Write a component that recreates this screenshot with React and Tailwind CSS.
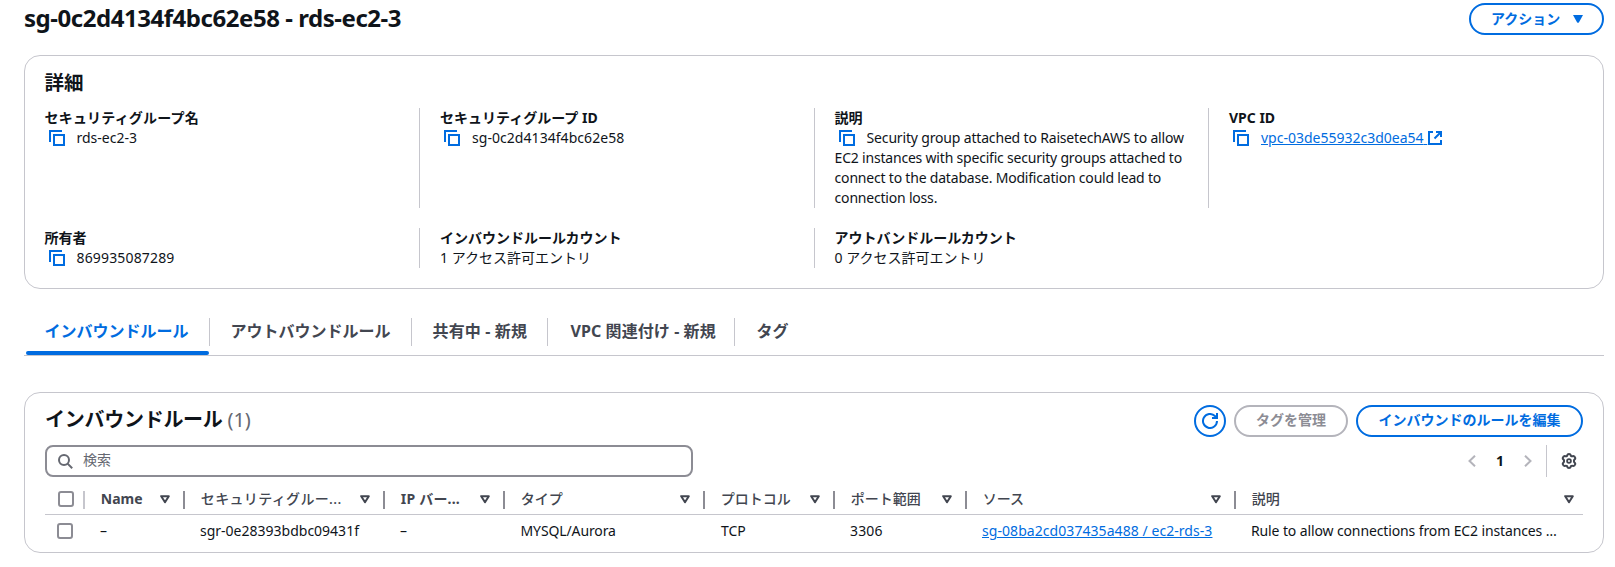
const LATIN = "font-['Noto_Sans','Noto_Sans_CJK_JP',sans-serif]";

function CopyIcon() {
  return (
    <svg className="ml-1 mr-3 mt-0.5 inline-block h-4 w-4 align-top" viewBox="0 0 16 16" fill="none" stroke="#006ce0" strokeWidth="2">
      <path d="M1 12V1H13" />
      <rect x="5" y="5" width="10" height="10" />
    </svg>
  );
}

function ExternalIcon() {
  return (
    <svg className="ml-px mt-[3px] inline-block h-3.5 w-3.5 align-top" viewBox="0 0 14 14" fill="none" stroke="#006ce0" strokeWidth="2">
      <path d="M5 1H1V13H13V9" />
      <path d="M8 1H13V6M13 1L6.5 7.5" />
    </svg>
  );
}

function FilterIcon() {
  return (
    <svg className="h-[9px] w-[10px] shrink-0" viewBox="0 0 10 9" fill="none" stroke="#424650" strokeWidth="2" strokeLinejoin="round">
      <path d="M1.2 1.2H8.8L5 7.2Z" />
    </svg>
  );
}

function Field({ label, divided, labelClass = "", children, className = "" }) {
  return (
    <div className={`text-sm leading-5 ${divided ? "border-l border-[#c6c6cd]" : ""} ${className}`}>
      <div className={`h-5 whitespace-nowrap font-bold ${labelClass}`}>{label}</div>
      <div>{children}</div>
    </div>
  );
}

function Checkbox() {
  return <span className="block h-4 w-4 rounded-[3px] border-2 border-[#8c8c94] bg-white" />;
}

function Tab({ label, active, last, className = "" }) {
  return (
    <div className={`flex h-[43px] flex-col ${className}`}>
      <div className={`flex h-7 items-center whitespace-nowrap pl-[20.5px] text-base font-bold ${last ? "" : "border-r border-[#c6c6cd]"} ${active ? "text-[#006ce0]" : "text-[#424650]"}`}>
        <span className="-mt-0.5">{label}</span>
      </div>
      {active && <div className="ml-0.5 mr-px mt-[5px] h-1 rounded-sm bg-[#006ce0]" />}
    </div>
  );
}

const GRID = "grid grid-cols-[40px_100px_200px_120px_200px_130px_132px_269px_347px]";

const COLUMNS = [
  { label: "Name", text: "font-bold" },
  { label: "セキュリティグルー...", text: "font-medium tracking-[0.35px]" },
  { label: "IP バー...", text: "font-bold tracking-[0.2px]" },
  { label: "タイプ", text: "font-medium" },
  { label: "プロトコル", text: "font-medium" },
  { label: "ポート範囲", text: "font-medium" },
  { label: "ソース", text: "font-medium" },
  { label: "説明", text: "font-medium" },
];

export default function App() {
  return (
    <div className={`h-[567px] w-[1615px] overflow-hidden bg-white pl-6 pr-[11px] pt-[3px] text-[#0f141a] ${LATIN}`}>
      <header className="flex h-8 items-center justify-between">
        <h1 className="-mt-0.5 whitespace-nowrap text-2xl font-bold leading-8 tracking-[-0.46px]">sg-0c2d4134f4bc62e58 - rds-ec2-3</h1>
        <button className="flex h-8 w-[135px] items-center rounded-full border-2 border-[#006ce0] pl-5 text-sm font-bold text-[#006ce0]">
          アクション
          <svg className="ml-[13px] h-2 w-2.5" viewBox="0 0 10 8" fill="#006ce0"><path d="M0 0H10L6 7.2Q5 8.4 4 7.2Z" /></svg>
        </button>
      </header>

      <section className="mt-5 h-[234px] rounded-2xl border border-[#c6c6cd] pl-[19.5px] pr-5 pt-[15px]">
        <h2 className="h-6 text-[19.5px] font-bold leading-6">詳細</h2>
        <div className="mt-[13px] grid grid-cols-[374.5px_395px_394px_1fr] gap-y-5">
          <Field label="セキュリティグループ名" labelClass="tracking-[0.2px]" className="h-[100px]"><CopyIcon />rds-ec2-3</Field>
          <Field label="セキュリティグループ ID" divided className="pl-5"><CopyIcon /><span className="tracking-[0.05px]">sg-0c2d4134f4bc62e58</span></Field>
          <Field label="説明" divided className="pl-[19.6px]">
            <div className="whitespace-nowrap tracking-[-0.2px]">
              <div className="tracking-[-0.17px]"><CopyIcon />Security group attached to RaisetechAWS to allow</div>
              <div>EC2 instances with specific security groups attached to</div>
              <div>connect to the database. Modification could lead to</div>
              <div>connection loss.</div>
            </div>
          </Field>
          <Field label="VPC ID" divided className="pl-5">
            <CopyIcon /><a className="text-[#006ce0] underline">vpc-03de55932c3d0ea54{"\u00a0"}</a><ExternalIcon />
          </Field>
          <Field label="所有者" className="h-10"><CopyIcon /><span className="tracking-[0.16px]">869935087289</span></Field>
          <Field label="インバウンドルールカウント" divided className="pl-5">1 アクセス許可エントリ</Field>
          <Field label="アウトバンドルールカウント" divided className="pl-[19.6px]">0 アクセス許可エントリ</Field>
        </div>
      </section>

      <nav className="mt-[29px] flex h-[38px] border-b border-[#c6c6cd]">
        <Tab label="インバウンドルール" active className="w-[186px]" />
        <Tab label="アウトバウンドルール" className="w-[202px]" />
        <Tab label={<span className="tracking-[0.15px]">共有中 - 新規</span>} className="w-[136px]" />
        <Tab label={<span className="pl-0.5 tracking-[0.08px]">VPC 関連付け - 新規</span>} className="w-[187px]" />
        <Tab label={<span className="pl-px">タグ</span>} last />
      </nav>

      <section className="mt-9 h-[161px] rounded-2xl border border-[#c6c6cd] px-5 pt-3">
        <div className="flex h-8 items-center">
          <h2 className="mr-auto whitespace-nowrap pb-0.5 text-xl font-bold leading-7 tracking-[-0.27px]">
            インバウンドルール <span className="font-normal tracking-[-0.1px] text-[#656871]">(1)</span>
          </h2>
          <button className="flex h-8 w-8 items-center justify-center rounded-full border-2 border-[#006ce0]">
            <svg className="h-4 w-4" viewBox="0 0 16 16" fill="none" stroke="#006ce0" strokeWidth="2">
              <path d="M15 8A7 7 0 1 1 12.9 3L15 5" />
              <path d="M15 0V5H10" />
            </svg>
          </button>
          <button className="ml-2 h-8 w-[114px] whitespace-nowrap rounded-full border-2 border-[#b4b4bb] pb-0.5 text-sm font-bold text-[#8c8c94]">タグを管理</button>
          <button className="ml-2 h-8 w-[227px] whitespace-nowrap rounded-full border-2 border-[#006ce0] pb-0.5 text-sm font-bold text-[#006ce0]">インバウンドのルールを編集</button>
        </div>
        <div className="mt-2 flex h-8 items-center">
          <div className="mr-auto flex h-8 w-[648px] items-center rounded-lg border-2 border-[#8c8c94] pl-[11px] text-sm text-[#656871]">
            <svg className="mr-2.5 h-[15px] w-[15px]" viewBox="0 0 15 15" fill="none" stroke="#656871" strokeWidth="2">
              <circle cx="6" cy="6" r="5" />
              <path d="M9.6 9.6L14.2 14.2" />
            </svg>
            <span className="-mt-0.5">検索</span>
          </div>
          <svg className="h-3 w-2" viewBox="0 0 8 12" fill="none" stroke="#b4b4bb" strokeWidth="2"><path d="M7 .7L1.5 6L7 11.3" /></svg>
          <span className="w-12 text-center text-sm font-bold">1</span>
          <svg className="h-3 w-2" viewBox="0 0 8 12" fill="none" stroke="#b4b4bb" strokeWidth="2"><path d="M1 .7L6.5 6L1 11.3" /></svg>
          <span className="ml-3.5 h-8 w-px bg-[#c6c6cd]" />
          <svg className="ml-3.5 mr-1.5 h-4 w-4" viewBox="0 0 16 16" fill="none" stroke="#424650" strokeWidth="2" strokeLinejoin="round">
            <path d="M8 1C9.6 1 9.7 1.9 10 2.9C10.6 3.4 11 3.5 12 3.1C13.2 2.9 14 4 14.3 5C14.4 6 13.4 6.5 13 7.2V8.8C13.4 9.5 14.4 10 14.3 11C14 12 13.2 13.1 12 12.9C11 12.5 10.6 12.6 10 13.1C9.7 14.1 9.6 15 8 15C6.4 15 6.3 14.1 6 13.1C5.4 12.6 5 12.5 4 12.9C2.8 13.1 2 12 1.7 11C1.6 10 2.6 9.5 3 8.8V7.2C2.6 6.5 1.6 6 1.7 5C2 4 2.8 2.9 4 3.1C5 3.5 5.4 3.4 6 2.9C6.3 1.9 6.4 1 8 1Z" />
            <circle cx="8" cy="8" r="1.9" strokeWidth="1.8" />
          </svg>
        </div>

        <div className={`${GRID} h-[38px] items-center border-b border-[#c6c6cd] pt-2`}>
          <div className="flex h-[18px] items-start border-r-2 border-[#c6c6cd] pl-[13px]"><Checkbox /></div>
          {COLUMNS.map((c, i) => (
            <div key={c.label} className={`flex h-[18px] items-center justify-between pl-[15.8px] text-sm text-[#424650] ${i === 7 ? "pr-[9px]" : "border-r-2 border-[#8c8c94] pr-[13px]"}`}>
              <span className={`-mt-0.5 whitespace-nowrap ${c.text}`}>{c.label}</span>
              <FilterIcon />
            </div>
          ))}
        </div>
        <div className={`${GRID} h-8 items-center whitespace-nowrap text-sm`}>
          <div className="pl-3"><Checkbox /></div>
          <div className="pl-[15px]">–</div>
          <div className="pl-[15px]">sgr-0e28393bdbc09431f</div>
          <div className="pl-[15px]">–</div>
          <div className="pl-[15.5px] tracking-[-0.12px]">MYSQL/Aurora</div>
          <div className="pl-4">TCP</div>
          <div className="pl-[15px] tracking-[0.15px]">3306</div>
          <div className="pl-[15px] tracking-[0.06px]"><a className="text-[#006ce0] underline">sg-08ba2cd037435a488 / ec2-rds-3</a></div>
          <div className="pl-[15px] tracking-[-0.12px]">Rule to allow connections from EC2 instances …</div>
        </div>
      </section>
    </div>
  );
}
